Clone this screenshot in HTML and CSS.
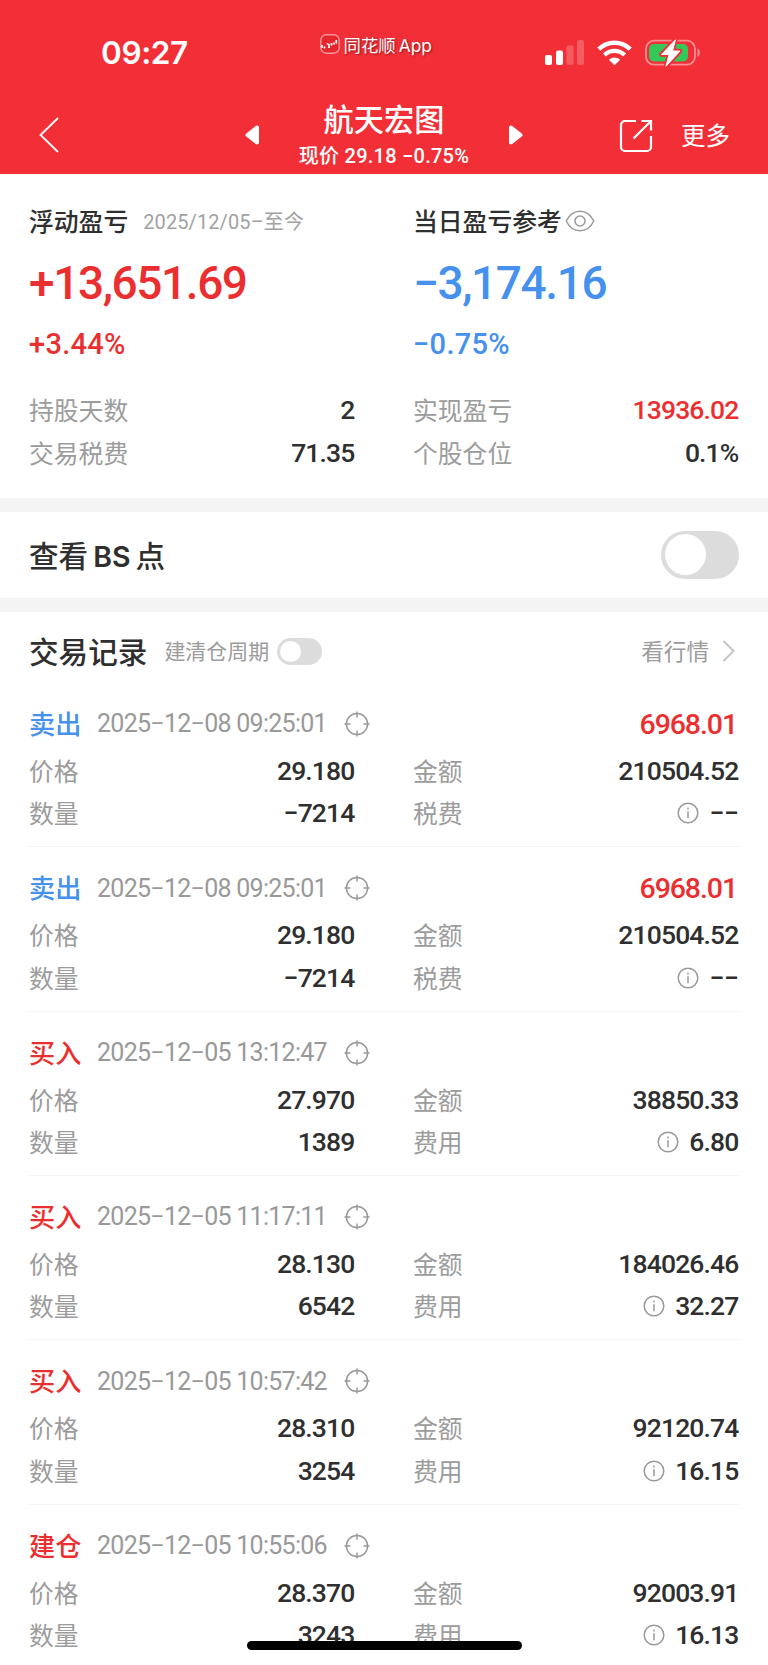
FILE: index.html
```html
<!DOCTYPE html>
<html lang="zh-CN">
<head>
    <meta charset="UTF-8">
    <meta name="viewport" content="width=device-width, initial-scale=1.0">
    <title>航天宏图</title>
    <link rel="stylesheet" href="styles.css">
</head>
<body>
    <!-- 公用图标 -->
    <svg class="defs" width="0" height="0">
        <symbol id="aim" viewBox="0 0 26 26">
            <circle cx="13" cy="13" r="10.6"/>
            <path d="M13 .5v6M13 19.5v6M.5 13h6M19.5 13h6"/>
        </symbol>
        <symbol id="info" viewBox="0 0 22 22">
            <circle cx="11" cy="11" r="9.8"/>
            <path d="M11 9.2v7M11 5.6v1.8"/>
        </symbol>
    </svg>

    <div class="header">
        <div class="status">
            <div class="time">09:27</div>
            <div class="app">
                <svg width="20" height="20" viewBox="0 0 20 20">
                    <rect x=".8" y=".8" width="18.4" height="18.4" rx="5.5" fill="#e5262d" stroke="#fa9599" stroke-width="1.4"/>
                    <path d="M2 11v3M4.500 12.500v2M7.500 9v1.500M9 10v4M11.500 9v2.500M14 8.500v2M16.300 6v3.500" fill="none" stroke="#fff" stroke-width="1.700"/>
                </svg>
                <span>同花顺<i>App</i></span>
            </div>
            <div class="state">
                <svg width="39" height="26" viewBox="0 0 39 26" fill="#fff">
                    <rect x="0" y="15" width="7" height="10" rx="2"/>
                    <rect x="11" y="10.500" width="7" height="14.500" rx="2"/>
                    <rect x="21.500" y="5.500" width="7" height="19.500" rx="2" opacity=".22"/>
                    <rect x="32" y="0" width="7" height="25" rx="2" opacity=".22"/>
                </svg>
                <svg class="wifi" width="35" height="26" viewBox="0 0 35 26" fill="none" stroke="#fff" stroke-width="4.400">
                    <path d="M1.800 9.200a22.500 22.500 0 0 1 31.400 0"/>
                    <path d="M7.400 15a14.500 14.500 0 0 1 20.200 0"/>
                    <path d="M11.800 19.800L17.500 25.200L23.200 19.800A8.500 8.500 0 0 0 11.800 19.800z" fill="#fff" stroke="none"/>
                </svg>
                <svg class="battery" width="56" height="28" viewBox="0 0 56 28">
                    <rect x="1" y="1.700" width="49" height="24" rx="8" fill="none" stroke="#f98d91" stroke-width="1.800"/>
                    <rect x="4" y="5" width="39" height="17.500" rx="5" fill="#34c759"/>
                    <path d="M52.500 9.500a5 5 0 0 1 0 8.500z" fill="#f98d91"/>
                    <path d="M30.500 .5L16.500 15.500h7.500l-3 12L35 12h-7.500z" fill="#fff" stroke="#f22f37" stroke-width="4.500" stroke-linejoin="round"/>
                    <path d="M30.500 .8L16.500 15.500h7.500l-3 11.700L35 12h-7.500z" fill="#fff" stroke="#fff" stroke-linejoin="round"/>
                </svg>
            </div>
        </div>
        <div class="nav">
            <svg class="back" width="20" height="36" viewBox="0 0 20 36" fill="none" stroke="#fff" stroke-width="1.800"><path d="M19 1L1.500 18L19 35"/></svg>
            <div class="stock">
                <svg width="15" height="20" viewBox="0 0 15 20" fill="#fff" stroke="#fff" stroke-width="4" stroke-linejoin="round"><path d="M2.500 10L12 2.500v15z"/></svg>
                <div class="stock_name">
                    <h1>航天宏图</h1>
                    <p>现价 <span>29.18 −0.75%</span></p>
                </div>
                <svg width="15" height="20" viewBox="0 0 15 20" fill="#fff" stroke="#fff" stroke-width="4" stroke-linejoin="round"><path d="M12.500 10L3 2.500v15z"/></svg>
            </div>
            <svg class="share" width="34" height="34" viewBox="0 0 34 34" fill="none" stroke="#fff" stroke-width="2.200">
                <path d="M17 2H6a4 4 0 0 0-4 4v22a4 4 0 0 0 4 4h22a4 4 0 0 0 4-4V17M22.500 2H32v9.500M32 2L14.500 19.500"/>
            </svg>
            <span class="more">更多</span>
        </div>
    </div>

    <div class="summary">
        <div class="summary_item">
            <h2>浮动盈亏<small>2025/12/05–至今</small></h2>
            <div class="big red">+13,651.69</div>
            <div class="rate red">+3.44%</div>
            <div class="row"><span>持股天数</span><b>2</b></div>
            <div class="row"><span>交易税费</span><b>71.35</b></div>
        </div>
        <div class="summary_item">
            <h2>当日盈亏参考<svg class="eye" width="30" height="22" viewBox="0 0 30 22"><path d="M1.200 11C4.500 4.500 9 1.200 15 1.200S25.500 4.500 28.800 11C25.500 17.500 21 20.800 15 20.800S4.500 17.500 1.200 11z"/><circle cx="15" cy="11" r="5"/></svg></h2>
            <div class="big blue">−3,174.16</div>
            <div class="rate blue">−0.75%</div>
            <div class="row"><span>实现盈亏</span><b class="red">13936.02</b></div>
            <div class="row"><span>个股仓位</span><b>0.1%</b></div>
        </div>
    </div>

    <div class="bs">
        <h3>查看<i>BS</i>点</h3>
        <span class="switch"></span>
    </div>

    <div class="record">
        <div class="record_head">
            <h3>交易记录</h3>
            <span class="cycle">建清仓周期</span>
            <span class="switch small"></span>
            <span class="quote">看行情</span>
            <svg width="13" height="22" viewBox="0 0 13 22" fill="none" stroke="#c4c4c4" stroke-width="2"><path d="M1.500 1L11.500 11L1.500 21"/></svg>
        </div>

        <div class="trade">
            <div class="trade_head">
                <strong class="blue">卖出</strong><time>2025−12−08 09:25:01</time><svg class="aim"><use href="#aim"/></svg>
                <em>6968.01</em>
            </div>
            <div class="trade_body">
                <div class="row"><span>价格</span><b>29.180</b></div>
                <div class="row"><span>金额</span><b>210504.52</b></div>
                <div class="row"><span>数量</span><b>−7214</b></div>
                <div class="row"><span>税费</span><svg class="info"><use href="#info"/></svg><b class="none">−−</b></div>
            </div>
        </div>

        <div class="trade">
            <div class="trade_head">
                <strong class="blue">卖出</strong><time>2025−12−08 09:25:01</time><svg class="aim"><use href="#aim"/></svg>
                <em>6968.01</em>
            </div>
            <div class="trade_body">
                <div class="row"><span>价格</span><b>29.180</b></div>
                <div class="row"><span>金额</span><b>210504.52</b></div>
                <div class="row"><span>数量</span><b>−7214</b></div>
                <div class="row"><span>税费</span><svg class="info"><use href="#info"/></svg><b class="none">−−</b></div>
            </div>
        </div>

        <div class="trade">
            <div class="trade_head">
                <strong class="red">买入</strong><time>2025−12−05 13:12:47</time><svg class="aim"><use href="#aim"/></svg>
            </div>
            <div class="trade_body">
                <div class="row"><span>价格</span><b>27.970</b></div>
                <div class="row"><span>金额</span><b>38850.33</b></div>
                <div class="row"><span>数量</span><b>1389</b></div>
                <div class="row"><span>费用</span><svg class="info"><use href="#info"/></svg><b>6.80</b></div>
            </div>
        </div>

        <div class="trade">
            <div class="trade_head">
                <strong class="red">买入</strong><time>2025−12−05 11:17:11</time><svg class="aim"><use href="#aim"/></svg>
            </div>
            <div class="trade_body">
                <div class="row"><span>价格</span><b>28.130</b></div>
                <div class="row"><span>金额</span><b>184026.46</b></div>
                <div class="row"><span>数量</span><b>6542</b></div>
                <div class="row"><span>费用</span><svg class="info"><use href="#info"/></svg><b>32.27</b></div>
            </div>
        </div>

        <div class="trade">
            <div class="trade_head">
                <strong class="red">买入</strong><time>2025−12−05 10:57:42</time><svg class="aim"><use href="#aim"/></svg>
            </div>
            <div class="trade_body">
                <div class="row"><span>价格</span><b>28.310</b></div>
                <div class="row"><span>金额</span><b>92120.74</b></div>
                <div class="row"><span>数量</span><b>3254</b></div>
                <div class="row"><span>费用</span><svg class="info"><use href="#info"/></svg><b>16.15</b></div>
            </div>
        </div>

        <div class="trade">
            <div class="trade_head">
                <strong class="red">建仓</strong><time>2025−12−05 10:55:06</time><svg class="aim"><use href="#aim"/></svg>
            </div>
            <div class="trade_body">
                <div class="row"><span>价格</span><b>28.370</b></div>
                <div class="row"><span>金额</span><b>92003.91</b></div>
                <div class="row"><span>数量</span><b>3243</b></div>
                <div class="row"><span>费用</span><svg class="info"><use href="#info"/></svg><b>16.13</b></div>
            </div>
        </div>
    </div>

    <!-- 底部横条，盖在列表上面 -->
    <div class="home_bar"></div>
</body>
</html>
```
FILE: styles.css
```css
*{
    margin: 0;
    padding: 0;
    box-sizing: border-box;
}
body{
    position: relative;
    width: 768px;
    height: 1665px;
    overflow: hidden;
    background: #fff;
    color: #2f2f2f;
    font-family: Roboto, "Noto Sans CJK SC", sans-serif;
}
svg{
    display: block;
    flex: none;
}
i,em{
    font-style: normal;
}
.defs{
    position: absolute;
}
.red{
    color: #eb2f30;
}
.blue{
    color: #4691ee;
}

/* 头部 */
.header{
    height: 174.33px;
    background: #f22f37;
    color: #fff;
}
.status{
    display: flex;
    height: 96px;
    padding: 0 67px 0 101px;
}
.time{
    width: 219px;
    padding-top: 33px;
    font: 600 31.5px/40px Inter, sans-serif;
    letter-spacing: -0.4px;
}
.app{
    display: flex;
    width: 226px;
    height: 20px;
    margin-top: 34px;
    font-size: 17.4px;
    line-height: 23px;
    text-shadow: 1px 1px 2px rgba(80, 0, 0, 0.6);
}
.app span{
    margin-left: 4px;
    white-space: nowrap;
}
.app i{
    margin-left: 3px;
    font-family: Inter, sans-serif;
}
.state{
    display: flex;
    margin-top: 39.5px;
}
.wifi{
    margin-left: 13px;
}
.battery{
    margin: -1px 0 0 13px;
}
.nav{
    display: flex;
    align-items: center;
    height: 78px;
    padding: 0 38px 0 39px;
}
.stock{
    display: flex;
    align-items: center;
    justify-content: space-between;
    width: 278px;
    margin-left: 186px;
}
.stock_name{
    padding-top: 2px;
    text-align: center;
}
.stock_name h1{
    font-size: 30.2px;
    line-height: 40px;
    font-weight: 500;
}
.stock_name p{
    font-size: 20px;
    line-height: 31px;
    font-weight: 500;
    letter-spacing: 0.25px;
    white-space: nowrap;
}
.share{
    margin: 1px 0 0 96px;
}
.more{
    margin: 4px 0 0 28px;
    font-size: 24.5px;
    line-height: 36px;
    white-space: nowrap;
}

/* 盈亏 */
.summary{
    display: grid;
    grid-template-columns: 326px 326px;
    column-gap: 58px;
    height: 337.67px;
    padding: 27px 29px 0;
    border-bottom: 14px solid #f4f4f4;
}
.summary h2{
    display: flex;
    align-items: center;
    height: 38px;
    font-size: 24.8px;
    font-weight: 500;
}
.summary small{
    margin-left: 15px;
    font-size: 20px;
    font-weight: 400;
    color: #a2a2a2;
    letter-spacing: 0.1px;
}
.eye{
    margin: 1px 0 0 3px;
}
.eye,.aim,.info{
    fill: none;
    stroke: #999;
    stroke-width: 1.5;
}
.big{
    height: 87px;
    font-size: 46px;
    line-height: 88px;
    font-weight: 500;
    letter-spacing: -1.4px;
}
.rate{
    height: 38px;
    margin-bottom: 25px;
    font-size: 29px;
    line-height: 36px;
    font-weight: 500;
    letter-spacing: 0.3px;
}
.row{
    display: flex;
    align-items: center;
    height: 42.3px;
    font-size: 24.8px;
}
.row span{
    margin: -2px auto 0 0;
    color: #9c9c9c;
}
.row b{
    margin: -1px 0.5px 0 0;
    font-size: 26.5px;
    font-weight: 500;
    letter-spacing: -0.85px;
}
.row .none{
    letter-spacing: -0.4px;
}

/* BS点 */
.bs{
    display: flex;
    align-items: center;
    justify-content: space-between;
    height: 100px;
    padding: 0 29px;
    border-bottom: 14px solid #f4f4f4;
}
h3{
    margin-top: -1px;
    font-size: 29.6px;
    font-weight: 500;
}
h3 i{
    margin: 0 5px;
    font-family: Inter, sans-serif;
    font-size: 28.5px;
    font-weight: 600;
}
.switch{
    display: block;
    width: 78px;
    height: 48px;
    padding: 3.5px;
    border-radius: 24px;
    background: #dcdcdc;
}
.switch::before{
    content: "";
    display: block;
    width: 41px;
    height: 41px;
    border-radius: 50%;
    background: #fff;
}
.switch.small{
    width: 45px;
    height: 27px;
    padding: 3px;
    margin-left: 8px;
}
.switch.small::before{
    width: 21px;
    height: 21px;
}

/* 交易记录 */
.record{
    padding: 0 29px;
}
.record_head{
    display: flex;
    align-items: center;
    height: 71px;
    padding: 8px 4px 0 0;
}
.cycle{
    margin: -2px 0 0 17px;
    font-size: 21px;
    color: #9c9c9c;
}
.quote{
    margin: -2px 13px 0 auto;
    font-size: 22.6px;
    color: #9c9c9c;
}
.trade{
    height: 164.33px;
    padding-top: 20px;
    border-bottom: 1px solid #f3f3f3;
}
.trade_head{
    display: flex;
    align-items: center;
    height: 42px;
    padding-right: 2px;
}
.trade_head strong{
    width: 68px;
    margin-top: -2px;
    font-size: 26.2px;
    font-weight: 500;
}
.trade_head time{
    width: 230px;
    font-size: 25px;
    color: #999;
    letter-spacing: -0.72px;
    white-space: nowrap;
}
.aim{
    width: 26px;
    height: 26px;
    margin-left: 16.5px;
}
.trade_head em{
    margin: 1px 0 0 auto;
    font-size: 28.5px;
    font-weight: 500;
    letter-spacing: -1.1px;
    color: #eb2f30;
}
.trade_body{
    display: grid;
    grid-template-columns: 326px 326px;
    column-gap: 58px;
    padding-top: 5px;
}
.info{
    width: 22px;
    height: 22px;
    margin-right: 10px;
}

.home_bar{
    position: absolute;
    left: 246.5px;
    top: 1641px;
    width: 275px;
    height: 9px;
    border-radius: 5px;
    background: #000;
}
```
